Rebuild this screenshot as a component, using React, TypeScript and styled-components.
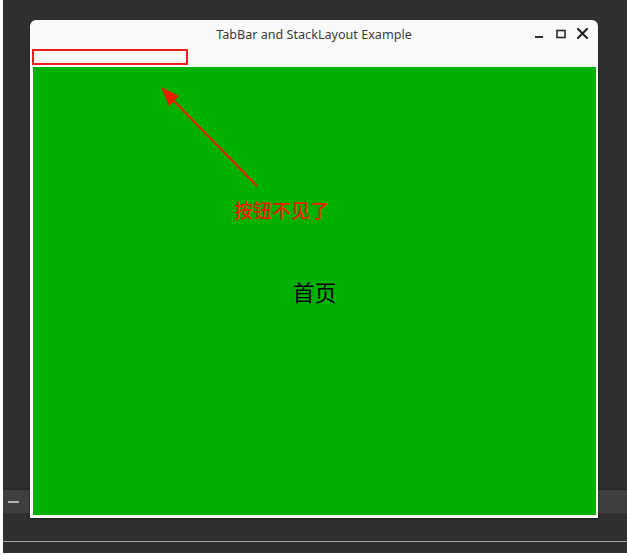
import React from "react";
import styled, { createGlobalStyle } from "styled-components";

const GlobalStyle = createGlobalStyle`
  html, body {
    margin: 0;
    padding: 0;
    background: #ffffff;
  }
  body {
    font-family: "Noto Sans", "Noto Sans CJK SC", sans-serif;
  }
`;

export default function App() {
  return (
    <>
      <GlobalStyle />
      <Desktop>
        <Backdrop />
        <DockEdge />
        <Dock>
          <DockDash />
        </Dock>
        <Backdrop $height={28} />
        <Rule />
        <Backdrop $grow />

        <Window>
          <TitleBar>
            <span />
            <Title>TabBar and StackLayout Example</Title>
            <Controls>
              <ControlButton aria-label="minimize">
                <svg width="10" height="10" viewBox="0 0 10 10">
                  <rect x="1" y="7" width="8" height="2" fill="#2a2a2a" />
                </svg>
              </ControlButton>
              <ControlButton aria-label="maximize">
                <svg width="10" height="10" viewBox="0 0 10 10">
                  <rect
                    x="1"
                    y="1.5"
                    width="8"
                    height="7"
                    fill="none"
                    stroke="#2a2a2a"
                    strokeWidth="1.6"
                  />
                </svg>
              </ControlButton>
              <ControlButton aria-label="close">
                <svg width="11" height="11" viewBox="0 0 11 11">
                  <path
                    d="M1 1 L10 10 M10 1 L1 10"
                    stroke="#1e1e1e"
                    strokeWidth="2"
                    strokeLinecap="square"
                  />
                </svg>
              </ControlButton>
            </Controls>
          </TitleBar>

          <TabStrip>
            <TabMarker />
          </TabStrip>

          <Page>首页</Page>

          <Annotation viewBox="0 0 568 498" width="568" height="498">
            <g transform="translate(-30,-20)">
              <line
                x1="257"
                y1="186"
                x2="172"
                y2="99"
                stroke="#f01a00"
                strokeWidth="2"
              />
              <polygon points="161,87 179,96 169,106" fill="#f01a00" />
            </g>
          </Annotation>
          <Note>按钮不见了</Note>
        </Window>
      </Desktop>
    </>
  );
}

const Desktop = styled.div`
  position: relative;
  width: 624px;
  height: 553px;
  margin-left: 3px;
  display: flex;
  flex-direction: column;
  background: #2f3032;
`;

const Backdrop = styled.div<{ $height?: number; $grow?: boolean }>`
  height: ${(p) => (p.$height ? `${p.$height}px` : "488px")};
  flex: ${(p) => (p.$grow ? "1" : "none")};
  background: #2f3032;
`;

const DockEdge = styled.div`
  height: 2px;
  background: #262729;
`;

const Dock = styled.div`
  height: 23px;
  display: flex;
  align-items: center;
  padding-left: 5px;
  background: #3e3f41;
`;

const DockDash = styled.div`
  width: 11px;
  height: 2px;
  background: #b4b4b4;
`;

const Rule = styled.div`
  height: 1px;
  background: #a8a8a8;
`;

const Window = styled.div`
  position: absolute;
  left: 27px;
  top: 20px;
  width: 568px;
  height: 498px;
  display: flex;
  flex-direction: column;
  background: #fafafa;
  border-radius: 6px 6px 0 0;
  box-shadow: 0 1px 3px rgba(0, 0, 0, 0.45);
`;

const TitleBar = styled.div`
  height: 27px;
  display: grid;
  grid-template-columns: 1fr auto 1fr;
  align-items: center;
`;

const Title = styled.span`
  font-size: 12.6px;
  color: #3a3a3a;
  padding-top: 1px;
`;

const Controls = styled.div`
  justify-self: end;
  display: flex;
  align-items: center;
  gap: 11px;
  padding-right: 10px;
`;

const ControlButton = styled.span`
  display: flex;
  width: 11px;
  height: 11px;
  align-items: center;
  justify-content: center;
`;

const TabStrip = styled.div`
  height: 20px;
  padding: 2px 0 2px 2px;
  box-sizing: border-box;
`;

const TabMarker = styled.div`
  width: 156px;
  height: 16px;
  box-sizing: border-box;
  border: 2px solid #f21c1c;
`;

const Page = styled.div`
  flex: 1;
  margin: 0 2px 3px 3px;
  display: flex;
  align-items: center;
  justify-content: center;
  background: #00b000;
  color: #000000;
  font-family: "Noto Sans CJK SC", sans-serif;
  font-size: 22px;
`;

const Annotation = styled.svg`
  position: absolute;
  left: 0;
  top: 0;
  pointer-events: none;
`;

const Note = styled.div`
  position: absolute;
  left: 204px;
  top: 179px;
  font-family: "Noto Sans CJK SC", sans-serif;
  font-size: 19px;
  font-weight: 500;
  line-height: 22px;
  color: #f01a00;
`;
